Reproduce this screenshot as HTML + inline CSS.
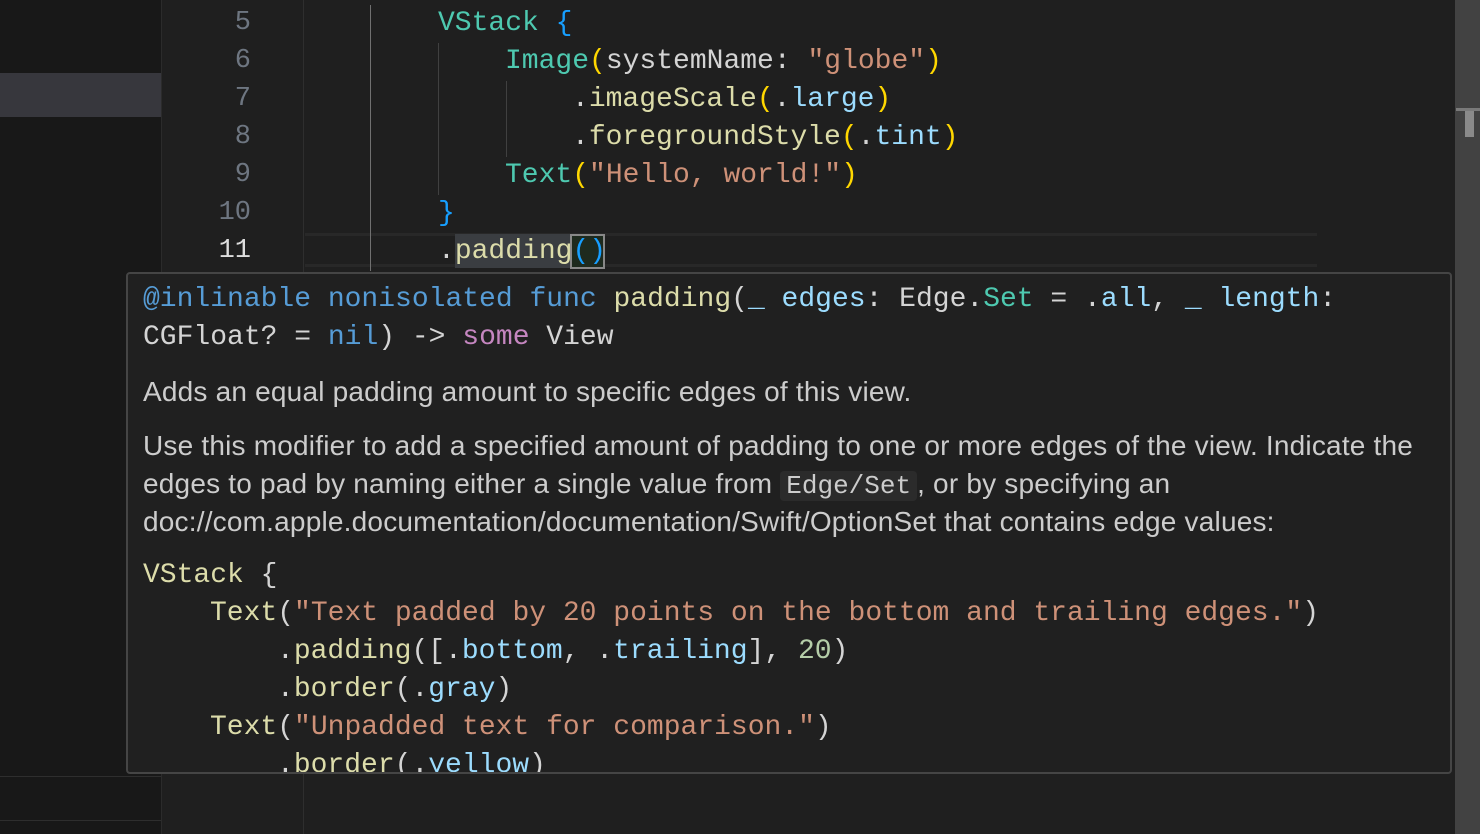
<!DOCTYPE html>
<html><head><meta charset="utf-8"><style>
*{margin:0;padding:0;box-sizing:border-box}
body{width:1480px;height:834px;background:#1f1f1f;position:relative;overflow:hidden;font-family:"Liberation Mono",monospace;}
.side{position:absolute;left:0;top:0;width:162px;height:834px;background:#181818;border-right:1px solid #2b2b2b}
.sel{position:absolute;left:0;top:73px;width:161px;height:44px;background:#37373d}
.gut{position:absolute;left:163px;top:0;width:141px;height:834px;background:#1f1f1f;border-right:1px solid #2e2e2e}
.ln{position:absolute;width:100px;text-align:right;font-size:27px;color:#6e7681;line-height:38px}
.code{position:absolute;font-size:28px;line-height:38px;white-space:pre;color:#d4d4d4}
.g{position:absolute;width:1px;background:#404040}
.k{color:#569cd6}.t{color:#4ec9b0}.s{color:#ce9178}.f{color:#dcdcaa}.p{color:#9cdcfe}.m{color:#c586c0}.y{color:#ffd700}.b{color:#179fff}.n{color:#b5cea8}
.pop{position:absolute;left:126px;top:272px;width:1326px;height:502px;background:#202020;border:2px solid #454545;border-radius:4px;overflow:hidden}
.doc{position:absolute;left:15px;font-family:"Liberation Sans",sans-serif;font-size:28px;color:#cccccc;white-space:nowrap;line-height:38px;letter-spacing:0.2px}
.ic{font-family:"Liberation Mono",monospace;background:#2b2b2b;border-radius:4px;padding:0 6px;font-size:26px;letter-spacing:0}
.sb{position:absolute;left:1455px;top:0;width:25px;height:834px;background:#424242}
</style></head><body>
<div class="side"><div class="sel"></div>
<div style="position:absolute;left:0;top:776px;width:161px;height:1px;background:#2e2e2e"></div>
<div style="position:absolute;left:0;top:820px;width:161px;height:1px;background:#2e2e2e"></div></div>
<div class="gut"></div>
<div class="ln" style="left:151px;top:4px">5</div>
<div class="ln" style="left:151px;top:42px">6</div>
<div class="ln" style="left:151px;top:80px">7</div>
<div class="ln" style="left:151px;top:118px">8</div>
<div class="ln" style="left:151px;top:156px">9</div>
<div class="ln" style="left:151px;top:194px">10</div>
<div class="ln" style="left:151px;top:232px;color:#ddd">11</div>
<div style="position:absolute;left:305px;top:233px;width:1012px;height:34px;border-top:3px solid #282828;border-bottom:3px solid #282828"></div>
<div class="g" style="left:370px;top:5px;height:266px;background:#707070"></div>
<div class="g" style="left:438px;top:43px;height:152px"></div>
<div class="g" style="left:506px;top:81px;height:76px"></div>
<div style="position:absolute;left:455px;top:234px;width:116px;height:34px;background:#3a3d41"></div>
<div style="position:absolute;left:570px;top:234px;width:35px;height:35px;border:2px solid #888;background:#1e2a1e"></div>
<div class="code" style="left:438px;top:5px"><span class="t">VStack</span> <span class="b">{</span></div>
<div class="code" style="left:505px;top:43px"><span class="t">Image</span><span class="y">(</span>systemName: <span class="s">"globe"</span><span class="y">)</span></div>
<div class="code" style="left:572px;top:81px">.<span class="f">imageScale</span><span class="y">(</span>.<span class="p">large</span><span class="y">)</span></div>
<div class="code" style="left:572px;top:119px">.<span class="f">foregroundStyle</span><span class="y">(</span>.<span class="p">tint</span><span class="y">)</span></div>
<div class="code" style="left:505px;top:157px"><span class="t">Text</span><span class="y">(</span><span class="s">"Hello, world!"</span><span class="y">)</span></div>
<div class="code" style="left:438px;top:195px"><span class="b">}</span></div>
<div class="code" style="left:438px;top:233px">.<span class="f">padding</span><span class="b">()</span></div>
<div class="sb"><div style="position:absolute;left:1px;top:108px;width:24px;height:3px;background:#7a7a7a"></div><div style="position:absolute;left:10px;top:111px;width:9px;height:26px;background:#8a8a8a"></div></div>
<div class="pop">
<div class="code" style="left:15px;top:7px"><span class="k">@inlinable nonisolated func</span> <span class="f">padding</span>(<span class="p">_ edges</span>: Edge.<span class="t">Set</span> = .<span class="p">all</span>, <span class="p">_ length</span>:</div>
<div class="code" style="left:15px;top:45px">CGFloat? = <span class="k">nil</span>) -&gt; <span class="m">some</span> View</div>
<div class="doc" style="top:99px">Adds an equal padding amount to specific edges of this view.</div>
<div class="doc" style="top:153px">Use this modifier to add a specified amount of padding to one or more edges of the view. Indicate the</div>
<div class="doc" style="top:191px">edges to pad by naming either a single value from <span class="ic">Edge/Set</span>, or by specifying an</div>
<div class="doc" style="top:229px">doc://com.apple.documentation/documentation/Swift/OptionSet that contains edge values:</div>
<div class="code" style="left:15px;top:283px"><span class="f">VStack</span> {</div>
<div class="code" style="left:82px;top:321px"><span class="f">Text</span>(<span class="s">"Text padded by 20 points on the bottom and trailing edges."</span>)</div>
<div class="code" style="left:149px;top:359px">.<span class="f">padding</span>([.<span class="p">bottom</span>, .<span class="p">trailing</span>], <span class="n">20</span>)</div>
<div class="code" style="left:149px;top:397px">.<span class="f">border</span>(.<span class="p">gray</span>)</div>
<div class="code" style="left:82px;top:435px"><span class="f">Text</span>(<span class="s">"Unpadded text for comparison."</span>)</div>
<div class="code" style="left:149px;top:473px">.<span class="f">border</span>(.<span class="p">yellow</span>)</div>
</div>
</body></html>
